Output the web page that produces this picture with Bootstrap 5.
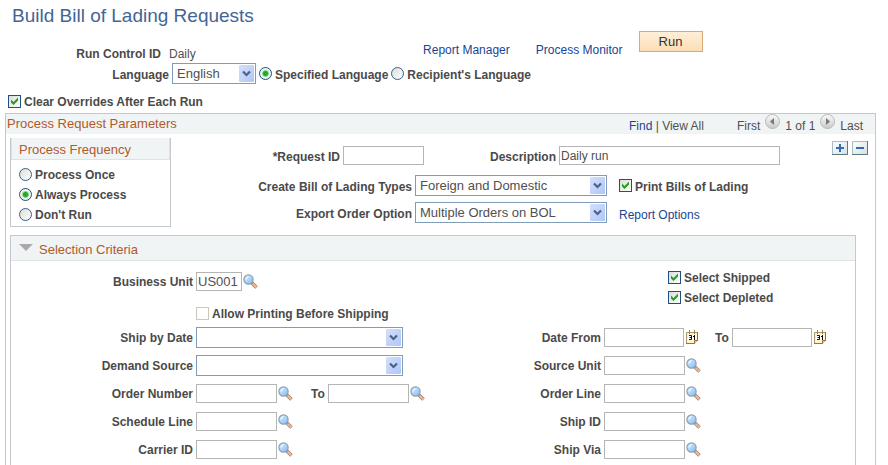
<!DOCTYPE html>
<html lang="en">
<head>
<meta charset="utf-8">
<meta name="viewport" content="width=device-width, initial-scale=1">
<title>Build Bill of Lading Requests</title>
<link href="https://cdn.jsdelivr.net/npm/bootstrap@5.3.0/dist/css/bootstrap.min.css" rel="stylesheet">
<style>
body{font:12px/16px "Liberation Sans",Arial,sans-serif;color:#505050;background:#fff}
a{color:#1a4493;text-decoration:none}
a:hover{text-decoration:underline}
.page{padding:0 12px 0 5px}
.page-title{font-size:19px;line-height:24px;color:#426596;padding:4px 0 0 7px;font-weight:400}
label,.lbl{font-weight:700;padding-top:2px;color:#4a4a4a}
.section-title{font-size:13px;line-height:18px;color:#b0592a;font-weight:400}
.run-row{min-height:35px}
.run-id{flex:0 0 48%;padding-bottom:1px}
.run-id .lbl{width:156px}
.run-links{gap:26px;padding-bottom:5px}
.btn-run{width:64px;height:21px;margin:0 0 6px -10px;padding:0;border:1px solid #dba878;border-radius:0;background:linear-gradient(#ffeed8,#fbdfb6);font-size:13px;line-height:17px;color:#333}
.lbl-lang{width:164px}
.clear-row{padding:8px 0 3px 3px}
.form-control{width:81px;height:19px;min-height:0;flex:none;padding:0 2px;border:1px solid #b5b5b5;border-radius:0;font-size:12px;line-height:17px;color:#505050}
.form-control.unit{width:46px;font-size:13px;padding:0 1px}
.form-control.desc{flex:0 1 221px;width:auto;min-width:60px;padding:0 1px}
.form-control.day{width:80px}
.form-select{height:21px;flex:none;padding:0 20px 0 4px;border:1px solid #7f9db9;border-radius:0;font-size:13px;line-height:18px;color:#505050;
background:#fff url("data:image/svg+xml,%3Csvg xmlns='http://www.w3.org/2000/svg' width='15' height='17'%3E%3Cdefs%3E%3ClinearGradient id='g' x2='1' y2='1'%3E%3Cstop stop-color='%23d3e0fd'/%3E%3Cstop offset='1' stop-color='%23afc6f9'/%3E%3C/linearGradient%3E%3C/defs%3E%3Crect width='15' height='17' rx='1' fill='url(%23g)'/%3E%3Cpath d='M4 6.500l3.500 3.500L11 6.500' fill='none' stroke='%234d6185' stroke-width='2.200'/%3E%3C/svg%3E") no-repeat right 1px center/15px 17px}
.sel-lang{width:84px}
.sel-type{width:192px}
.sel-wide{width:207px}
.form-check-input{width:13px;height:13px;margin:0;flex:none;border:1px solid #1c5180;background-color:#fff;background-image:linear-gradient(135deg,#dcdcd7,#fff)}
.form-check-input[type=checkbox]{border-radius:0}
.form-check-input[type=radio]{border-color:#33618c}
.form-check-input:checked{background-color:#fff;border-color:#1c5180}
.form-check-input:checked[type=checkbox]{background:url("data:image/svg+xml,%3Csvg xmlns='http://www.w3.org/2000/svg' viewBox='0 0 11 11'%3E%3Cpath d='M2 3.500v3L4.500 9 9 4.500v-3L4.500 6z' fill='%2321a121'/%3E%3C/svg%3E") center/11px,linear-gradient(135deg,#dcdcd7,#fff)}
.form-check-input:checked[type=radio]{background:radial-gradient(circle,#22a922 0 2px,#8fd48f 3px,#f3f3f0 4px)}
.form-check-input.faint{border-color:#cac8bb;background:#fff}
.check{gap:3px}
.panel{border:1px solid #c5c8ce;border-bottom:0}
.panel-head{background:#f0f4f5}
.outer-head{height:20px;padding:0 12px 0 1px}
.outer-head .section-title{padding-top:1px}
.pager{gap:5px;padding-top:4px}
.pager-find{margin-right:28px}
.pager .spot{width:15px;height:15px;margin-top:-4px}
.icon-btn{padding:0;border:0;background:none;line-height:0;flex:none}
.outer-body{padding:4px 19px 0 4px}
.freq{width:161px;flex:none}
.freq.panel{border-bottom:1px solid #c5c8ce}
.freq legend{padding:3px 7px 0;height:22px;border:1px solid #dfe2e5;border-top:0}
.freq-list{padding:4px 8px 2px;clear:both}
.freq-list .check{height:20px}
.ask{padding-top:8px}
.lbl-a{width:169px}
.lbl-b{width:241px}
.g3,.line{gap:3px}
.line{height:28px}
.line-a{height:19px;margin-bottom:10px}
.line-b{height:21px}
.line-b + .line-b{margin-top:6px}
.desc-set{margin-left:63px;gap:3px;min-width:0;flex:1 1 auto}
.side{margin-left:9px}
.row-tools{gap:4px;padding-top:3px;margin-right:-12px}
.sel-head{height:25px;padding:0 8px;border-bottom:1px solid #e0e3e6;gap:6px}
.sel-head .section-title{padding-top:5px}
.sel-body{padding-top:6px}
.lbl-l{width:182px}
.lbl-r{width:168px}
.to-set{margin-left:15px}
.allow{height:20px;margin-top:8px;padding-left:185px}
.flags{padding-left:235px}
.flags .check{height:20px}
.find-icon{width:15px;height:15px}
.line .icon-btn{margin-left:-2px}
.line .icon-btn.cal{margin:0 -2px 0 -1px}
</style>
<script src="https://cdn.jsdelivr.net/npm/bootstrap@5.3.0/dist/js/bootstrap.bundle.min.js"></script>
</head>
<body>
<svg width="0" height="0" class="position-absolute" aria-hidden="true">
<defs>
<linearGradient id="lens" x2="1" y2="1"><stop stop-color="#e2f2ff"/><stop offset="1" stop-color="#7fb9f2"/></linearGradient>
<linearGradient id="ball" x2="0" y2="1"><stop stop-color="#fbfbfb"/><stop offset="1" stop-color="#c9c9c9"/></linearGradient>
<linearGradient id="tile" x2="1" y2="1"><stop stop-color="#fff"/><stop offset="1" stop-color="#d3e0e4"/></linearGradient>
</defs>
<symbol id="i-find" viewBox="0 0 15 15"><path d="M8.500 8.500l5 5" stroke="#8d8480" stroke-width="3.600"/><path d="M9.500 9.500l4 4" stroke="#f5b88a" stroke-width="2.200"/><circle cx="5.500" cy="5.500" r="4.600" fill="url(#lens)" stroke="#8a9cb2" stroke-width="1.200"/><path d="M3 5.500Q3.200 3.200 5.500 2.800" stroke="#fff" fill="none"/></symbol>
<symbol id="i-cal" viewBox="0 0 13 14"><path d="M.5 2.500h11v8l-3 3h-8z" fill="#fff2c4" stroke="#a8966a"/><path d="M11.500 2v9" stroke="#8c774a"/><path d="M0 13.500h9" stroke="#8c774a"/><path d="M8.500 13.500v-3h3" fill="#e9d690" stroke="#8c774a"/><path d="M3.500 0v4M8.500 0v4" stroke="#8d8468"/><path d="M2 5h8v5H2z" fill="#fff"/><path d="M3 5.500h2.500v4H3M3.500 7.500h2M7 6.500h1.500M8.500 5v5" stroke="#111" fill="none"/></symbol>
<symbol id="i-prev" viewBox="0 0 15 15"><circle cx="7.500" cy="7.500" r="7" fill="url(#ball)" stroke="#b9b9b9"/><path d="M9 4v7L5 7.500z" fill="#777"/></symbol>
<symbol id="i-next" viewBox="0 0 15 15"><circle cx="7.500" cy="7.500" r="7" fill="url(#ball)" stroke="#b9b9b9"/><path d="M6 4v7L10 7.500z" fill="#777"/></symbol>
<symbol id="i-add" viewBox="0 0 16 14"><path d="M.5.500h15v13H.500z" fill="url(#tile)" stroke="#a9bcc4"/><path d="M15.500 0v13.500H0" fill="none" stroke="#5f7882"/><path d="M4 7h8M8 3v8" stroke="#356bb0" stroke-width="2"/></symbol>
<symbol id="i-del" viewBox="0 0 16 14"><path d="M.5.500h15v13H.500z" fill="url(#tile)" stroke="#a9bcc4"/><path d="M15.500 0v13.500H0" fill="none" stroke="#5f7882"/><path d="M4 7h8" stroke="#356bb0" stroke-width="2"/></symbol>
</svg>
<main class="page container-fluid min-vh-100 d-flex flex-column">
  <h1 class="page-title mb-0">Build Bill of Lading Requests</h1>
  <div class="run-row d-flex align-items-end">
    <div class="run-id d-flex align-items-end gap-2"><span class="lbl text-end">Run Control ID</span><span>Daily</span></div>
    <div class="run-links d-flex align-items-end"><a href="#">Report Manager</a><a href="#">Process Monitor</a><button type="button" class="btn btn-run">Run</button></div>
  </div>
  <div class="d-flex align-items-center g3">
    <label class="lbl-lang text-end" for="lang">Language</label>
    <select id="lang" class="form-select sel-lang"><option>English</option></select>
    <div class="check d-flex align-items-center"><input class="form-check-input" type="radio" name="lt" id="lt1" checked><label for="lt1">Specified Language</label></div>
    <div class="check d-flex align-items-center"><input class="form-check-input" type="radio" name="lt" id="lt2"><label for="lt2">Recipient's Language</label></div>
  </div>
  <div class="check clear-row d-flex align-items-center"><input class="form-check-input" type="checkbox" id="clr" checked><label for="clr">Clear Overrides After Each Run</label></div>

  <section class="panel flex-grow-1 d-flex flex-column">
    <header class="panel-head outer-head d-flex justify-content-between">
      <h2 class="section-title mb-0">Process Request Parameters</h2>
      <nav class="pager d-flex" aria-label="Requests">
        <span class="pager-find"><a href="#">Find</a> | <a href="#" class="text-reset">View All</a></span>
        <span>First</span>
        <button type="button" class="icon-btn spot" aria-label="Previous"><svg width="15" height="15"><use href="#i-prev"/></svg></button>
        <span>1 of 1</span>
        <button type="button" class="icon-btn spot" aria-label="Next"><svg width="15" height="15"><use href="#i-next"/></svg></button>
        <span>Last</span>
      </nav>
    </header>
    <div class="outer-body flex-grow-1 d-flex flex-column">
      <div class="d-flex align-items-start mb-2">
        <fieldset class="freq panel border-top-0">
          <legend class="section-title panel-head mb-0">Process Frequency</legend>
          <div class="freq-list">
            <div class="check d-flex align-items-center"><input class="form-check-input" type="radio" name="pf" id="pf1"><label for="pf1">Process Once</label></div>
            <div class="check d-flex align-items-center"><input class="form-check-input" type="radio" name="pf" id="pf2" checked><label for="pf2">Always Process</label></div>
            <div class="check d-flex align-items-center"><input class="form-check-input" type="radio" name="pf" id="pf3"><label for="pf3">Don't Run</label></div>
          </div>
        </fieldset>
        <div class="ask flex-grow-1">
          <div class="line-a d-flex align-items-center g3">
            <label class="lbl-a text-end" for="req">*Request ID</label><input class="form-control" id="req">
            <div class="desc-set d-flex align-items-center"><label for="desc">Description</label><input class="form-control desc" id="desc" value="Daily run"></div>
          </div>
          <div class="line-b d-flex align-items-center g3">
            <label class="lbl-b text-end" for="types">Create Bill of Lading Types</label><select id="types" class="form-select sel-type"><option>Foreign and Domestic</option></select>
            <div class="check side d-flex align-items-center"><input class="form-check-input" type="checkbox" id="prt" checked><label for="prt">Print Bills of Lading</label></div>
          </div>
          <div class="line-b d-flex align-items-center g3">
            <label class="lbl-b text-end" for="exp">Export Order Option</label><select id="exp" class="form-select sel-type"><option>Multiple Orders on BOL</option></select>
            <a href="#" class="side pt-1">Report Options</a>
          </div>
        </div>
        <div class="row-tools d-flex align-items-start">
          <button type="button" class="icon-btn" aria-label="Add row"><svg width="16" height="14"><use href="#i-add"/></svg></button>
          <button type="button" class="icon-btn" aria-label="Delete row"><svg width="16" height="14"><use href="#i-del"/></svg></button>
        </div>
      </div>

      <section class="panel flex-grow-1">
        <header class="panel-head sel-head d-flex">
          <button type="button" class="icon-btn align-self-start pt-2" aria-label="Collapse"><svg width="14" height="7"><path d="M0 0h14L7 7z" fill="#aaa"/></svg></button>
          <h3 class="section-title mb-0">Selection Criteria</h3>
        </header>
        <div class="sel-body row g-0">
          <div class="col-6">
            <div class="line d-flex align-items-center"><label class="lbl-l text-end" for="bu">Business Unit</label><input class="form-control unit" id="bu" value="US001"><button type="button" class="icon-btn" aria-label="Look up Business Unit"><svg class="find-icon"><use href="#i-find"/></svg></button></div>
            <div class="allow check d-flex align-items-center"><input class="form-check-input faint" type="checkbox" id="allow"><label for="allow">Allow Printing Before Shipping</label></div>
            <div class="line d-flex align-items-center"><label class="lbl-l text-end" for="sbd">Ship by Date</label><select id="sbd" class="form-select sel-wide"><option></option></select></div>
            <div class="line d-flex align-items-center"><label class="lbl-l text-end" for="dsrc">Demand Source</label><select id="dsrc" class="form-select sel-wide"><option></option></select></div>
            <div class="line d-flex align-items-center"><label class="lbl-l text-end" for="on1">Order Number</label><input class="form-control" id="on1"><button type="button" class="icon-btn" aria-label="Look up Order Number"><svg class="find-icon"><use href="#i-find"/></svg></button><label class="to-set" for="on2">To</label><input class="form-control" id="on2"><button type="button" class="icon-btn" aria-label="Look up last Order Number"><svg class="find-icon"><use href="#i-find"/></svg></button></div>
            <div class="line d-flex align-items-center"><label class="lbl-l text-end" for="sl">Schedule Line</label><input class="form-control" id="sl"><button type="button" class="icon-btn" aria-label="Look up Schedule Line"><svg class="find-icon"><use href="#i-find"/></svg></button></div>
            <div class="line d-flex align-items-center"><label class="lbl-l text-end" for="car">Carrier ID</label><input class="form-control" id="car"><button type="button" class="icon-btn" aria-label="Look up Carrier ID"><svg class="find-icon"><use href="#i-find"/></svg></button></div>
          </div>
          <div class="col-6">
            <div class="flags mb-3">
              <div class="check d-flex align-items-center"><input class="form-check-input" type="checkbox" id="ss" checked><label for="ss">Select Shipped</label></div>
              <div class="check d-flex align-items-center"><input class="form-check-input" type="checkbox" id="sd" checked><label for="sd">Select Depleted</label></div>
            </div>
            <div class="line d-flex align-items-center"><label class="lbl-r text-end" for="df">Date From</label><input class="form-control day" id="df"><button type="button" class="icon-btn cal" aria-label="Choose first date"><svg width="13" height="14"><use href="#i-cal"/></svg></button><label class="to-set" for="dt">To</label><input class="form-control day" id="dt"><button type="button" class="icon-btn cal" aria-label="Choose last date"><svg width="13" height="14"><use href="#i-cal"/></svg></button></div>
            <div class="line d-flex align-items-center"><label class="lbl-r text-end" for="su">Source Unit</label><input class="form-control" id="su"><button type="button" class="icon-btn" aria-label="Look up Source Unit"><svg class="find-icon"><use href="#i-find"/></svg></button></div>
            <div class="line d-flex align-items-center"><label class="lbl-r text-end" for="ol">Order Line</label><input class="form-control" id="ol"><button type="button" class="icon-btn" aria-label="Look up Order Line"><svg class="find-icon"><use href="#i-find"/></svg></button></div>
            <div class="line d-flex align-items-center"><label class="lbl-r text-end" for="sid">Ship ID</label><input class="form-control" id="sid"><button type="button" class="icon-btn" aria-label="Look up Ship ID"><svg class="find-icon"><use href="#i-find"/></svg></button></div>
            <div class="line d-flex align-items-center"><label class="lbl-r text-end" for="sv">Ship Via</label><input class="form-control" id="sv"><button type="button" class="icon-btn" aria-label="Look up Ship Via"><svg class="find-icon"><use href="#i-find"/></svg></button></div>
          </div>
        </div>
      </section>
    </div>
  </section>
</main>
</body>
</html>
